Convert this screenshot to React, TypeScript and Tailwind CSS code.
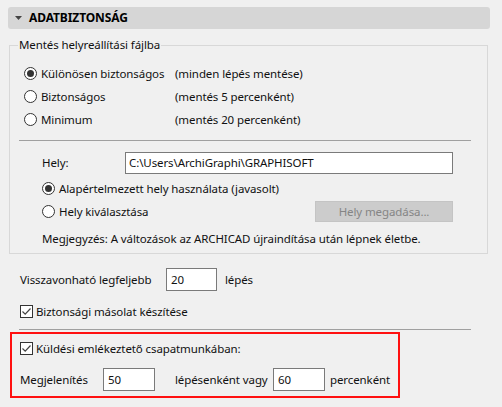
import React from 'react'

function Radio({ checked }: { checked?: boolean }) {
  return (
    <span className="w-[13px] h-[13px] rounded-full border border-[#333] bg-white flex items-center justify-center shrink-0">
      {checked && <span className="w-[7px] h-[7px] rounded-full bg-[#333]" />}
    </span>
  )
}

function Check() {
  return (
    <span className="w-[13px] h-[13px] border border-[#333] bg-white flex items-center justify-center shrink-0">
      <svg width="11" height="11" viewBox="0 0 11 11">
        <path d="M1.5 5.5 L4.2 8.2 L9.5 2.5" fill="none" stroke="#444" strokeWidth="1.2" />
      </svg>
    </span>
  )
}

function Field({ value, w }: { value: string; w: string }) {
  return (
    <div className={`${w} h-[23px] border border-[#7a7a7a] bg-white flex items-center pl-[4px] shrink-0`}>{value}</div>
  )
}

const radios = [
  { label: 'Különösen biztonságos', note: '(minden lépés mentése)', checked: true },
  { label: 'Biztonságos', note: '(mentés 5 percenként)' },
  { label: 'Minimum', note: '(mentés 20 percenként)' },
]

export default function App() {
  return (
    <div className="w-[502px] h-[407px] bg-[#f0f0f0] pt-[7px] text-[11.5px] tracking-[-0.1px] whitespace-nowrap text-[#111] font-['Noto_Sans',sans-serif] overflow-hidden">
      {/* fejléc */}
      <div className="ml-[8px] w-[482px] h-[22px] rounded-[3px] bg-[#d6d6d6] flex items-center pl-[7px] gap-[7px]">
        <svg width="7" height="4" viewBox="0 0 7 4"><path d="M0 0 H7 L3.5 4 Z" fill="#444" /></svg>
        <span className="font-bold text-black text-[12px]">ADATBIZTONSÁG</span>
      </div>

      {/* csoport */}
      <fieldset className="mt-[8px] ml-[9px] w-[479px] border border-[#d8d8d8]">
        <legend className="ml-[8px] px-[1px] leading-[16px]">Mentés helyreállítási fájlba</legend>
        <div className="pt-[9px] pl-[14px] flex flex-col">
          {radios.map(r => (
            <div key={r.label} className="h-[23px] flex items-center">
              <div className="w-[151px] flex items-center gap-[4px]">
                <Radio checked={r.checked} />
                <span>{r.label}</span>
              </div>
              <span>{r.note}</span>
            </div>
          ))}
        </div>
        <div className="mt-[9px] ml-[9px] w-[452px] h-px bg-[#a0a0a0]" />
        <div className="pl-[32px] flex flex-col">
          <div className="mt-[11px] h-[22px] flex items-center">
            <span className="w-[83px]">Hely:</span>
            <div className="w-[328px] h-[22px] border border-[#7a7a7a] bg-white flex items-center pl-[3px]">C:\Users\ArchiGraphi\GRAPHISOFT</div>
          </div>
          <div className="mt-[3px] h-[23px] flex items-center gap-[4px]">
            <Radio checked />
            <span>Alapértelmezett hely használata (javasolt)</span>
          </div>
          <div className="w-[411px] h-[23px] flex items-center justify-between">
            <div className="flex items-center gap-[4px]">
              <Radio />
              <span>Hely kiválasztása</span>
            </div>
            <div className="w-[138px] h-[21px] bg-[#cccccc] border border-[#c4c4c4] flex items-center justify-center text-[#858585]">Hely megadása...</div>
          </div>
          <div className="mt-[4px] mb-[3px] h-[23px] flex items-center">
            Megjegyzés: A változások az ARCHICAD újraindítása után lépnek életbe.
          </div>
        </div>
      </fieldset>

      <div className="mt-[14px] pl-[20px] h-[23px] flex items-center">
        <span className="w-[146px]">Visszavonható legfeljebb</span>
        <Field value="20" w="w-[51px]" />
        <span className="ml-[8px]">lépés</span>
      </div>
      <div className="mt-[9px] pl-[20px] h-[23px] flex items-center gap-[3px]">
        <Check />
        <span>Biztonsági másolat készítése</span>
      </div>
      <div className="mt-[6px] ml-[19px] w-[452px] h-px bg-[#a0a0a0]" />

      {/* kiemelt rész */}
      <div className="mt-[2px] ml-[10px] w-[390px] h-[66px] border-2 border-[#ff1010] pl-[8px] pt-[3px] flex flex-col">
        <div className="h-[23px] flex items-center gap-[3px]">
          <Check />
          <span>Küldési emlékeztető csapatmunkában:</span>
        </div>
        <div className="mt-[8px] h-[23px] flex items-center">
          <span className="w-[83px]">Megjelenítés</span>
          <Field value="50" w="w-[52px]" />
          <span className="ml-[20px] w-[98px]">lépésenként vagy</span>
          <Field value="60" w="w-[52px]" />
          <span className="ml-[5px]">percenként</span>
        </div>
      </div>
    </div>
  )
}
